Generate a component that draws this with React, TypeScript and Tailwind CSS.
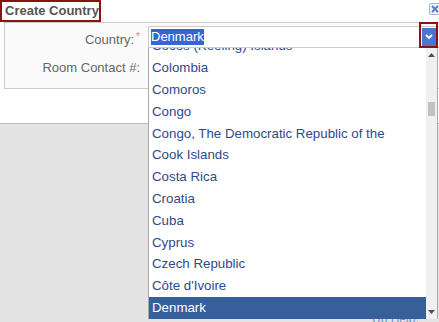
const countries = [
  "Cocos (Keeling) Islands",
  "Colombia",
  "Comoros",
  "Congo",
  "Congo, The Democratic Republic of the",
  "Cook Islands",
  "Costa Rica",
  "Croatia",
  "Cuba",
  "Cyprus",
  "Czech Republic",
  "Côte d'Ivoire",
  "Denmark",
];

const App = () => {
  return (
    <div className="relative h-[322px] w-[439px] overflow-hidden bg-[#e3e3e3] font-['Liberation_Sans',Arial,sans-serif] text-[13px]">
      {/* dialog */}
      <div className="h-[124px] w-[460px] border-b border-[#bdbdbd] bg-white">
        <div className="flex h-[22px] items-start justify-between">
          <div className="flex h-[22px] w-[101px] items-center border-2 border-[#8b1212] pl-[3px] font-bold text-[#555]">
            Create Country
          </div>
          <svg className="mr-[19px] mt-[3px]" width="12" height="12" viewBox="0 0 12 12">
            <rect x="0.5" y="0.5" width="11" height="11" rx="1.5" fill="#eef3fb" stroke="#9fb6dc" />
            <path d="M3 3 L9 9 M9 3 L3 9" stroke="#5a7fc0" strokeWidth="2" />
          </svg>
        </div>
        <div className="ml-[4px] h-[67px] border border-[#cccccc] bg-[#fafafa]">
          <div className="flex h-[30px]">
            <div className="w-[135px] pt-[9px] text-right leading-[15px] text-[#666]">
              Country:
              <span className="relative -top-[4px] ml-[2px] text-[10px] text-[#e87a7a]">*</span>
            </div>
            <div className="ml-[8px] mt-[3px] flex h-[22px] w-[310px] items-center border border-[#cccccc] bg-white pl-[2px]">
              <span className="bg-[#3367d6] leading-[16px] text-white">Denmark</span>
              <div className="ml-auto mr-[21px] flex h-[19px] w-[14px] shrink-0 items-center justify-center bg-[#4a76d0]">
                <svg width="8" height="6" viewBox="0 0 8 6">
                  <path d="M1 1 L4 4 L7 1" stroke="white" strokeWidth="1.8" fill="none" />
                </svg>
              </div>
            </div>
          </div>
          <div className="flex">
            <div className="w-[135px] pt-[7px] text-right leading-[15px] text-[#666]">Room Contact #:</div>
          </div>
        </div>
      </div>

      {/* highlight around dropdown button */}
      <div className="absolute left-[419px] top-[22px] h-[26px] w-[19px] border-2 border-[#8b1212]" />

      {/* footer remnant under list */}
      <div className="absolute left-[409px] top-[312px] h-[12px] w-[9px] border-x border-[#cfcfcf]" />
      <div className="absolute left-[372px] top-[313px] text-[12px] leading-[12px] text-[#7a93c4]">Up Help</div>

      {/* dropdown list */}
      <div className="absolute left-[148px] top-[48px] flex h-[271px] w-[290px] overflow-hidden border-x border-[#aaa] bg-white">
        <div className="flex-1 overflow-hidden text-[13.3px]">
          <div className="-mt-[12.6px]">
            {countries.map((name) => (
              <div
                key={name}
                className={
                  name === "Denmark"
                    ? "flex h-[21.8px] items-center bg-[#37609a] pl-[3px] text-white"
                    : "flex h-[21.8px] items-center pl-[3px] text-[#2e4a8c]"
                }
              >
                {name}
              </div>
            ))}
          </div>
        </div>
        <div className="relative w-[11px] bg-[#f0f0f0]">
          <svg className="absolute left-[2px] top-[5px]" width="7" height="4" viewBox="0 0 7 4">
            <path d="M0 4 L3.5 0 L7 4 Z" fill="#505050" />
          </svg>
          <div className="absolute left-[2px] top-[54px] h-[14px] w-[7px] bg-[#c1c1c1]" />
          <svg className="absolute bottom-[5px] left-[2px]" width="7" height="4" viewBox="0 0 7 4">
            <path d="M0 0 L7 0 L3.5 4 Z" fill="#505050" />
          </svg>
        </div>
      </div>
    </div>
  );
};

export default App;
